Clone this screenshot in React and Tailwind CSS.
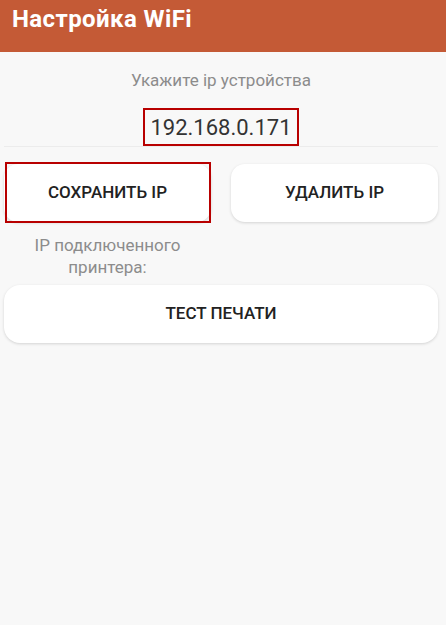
export default function App() {
    return (
        <div className="min-h-[625px] bg-[#f8f8f8] font-['Roboto',sans-serif]">
            <div className="h-[52px] bg-[#c45a36] px-3 pt-[4px]">
                <h1 className="text-[24px] font-bold leading-[30px] tracking-[0.4px] text-white">Настройка WiFi</h1>
            </div>

            <div className="pl-1 pr-2">
                <p className="mt-[18px] text-center text-[17px] leading-[20px] text-[#8c8c8c]">
                    Укажите ip устройства
                </p>

                {/* IP field */}
                <div className="mt-[18px] flex justify-center border-b border-[#ececec]">
                    <div className="flex h-[38px] items-center border-2 border-[#b80000] px-[5px] text-[22px] text-[#333]">
                        192.168.0.171
                    </div>
                </div>

                <div className="mt-[17px] grid grid-cols-2 gap-5">
                    <div>
                        <div className="relative">
                            <button className="flex h-[58px] w-full items-center justify-center rounded-[14px] bg-white text-[17px] font-medium text-[#222] shadow-[0_1px_3px_rgba(0,0,0,0.15)]">
                                СОХРАНИТЬ IP
                            </button>
                            <div className="absolute -top-[2px] -bottom-[1px] left-[1px] right-0 border-2 border-[#b80000]"></div>
                        </div>
                        <p className="mt-[12px] text-center text-[17px] leading-[22px] text-[#8c8c8c]">
                            IP подключенного принтера:
                        </p>
                    </div>
                    <div>
                        <button className="flex h-[58px] w-full items-center justify-center rounded-[14px] bg-white text-[17px] font-medium text-[#222] shadow-[0_1px_3px_rgba(0,0,0,0.15)]">
                            УДАЛИТЬ IP
                        </button>
                    </div>
                </div>

                <button className="mt-[7px] flex h-[58px] w-full items-center justify-center rounded-[16px] bg-white text-[17px] font-medium text-[#222] shadow-[0_1px_3px_rgba(0,0,0,0.15)]">
                    ТЕСТ ПЕЧАТИ
                </button>
            </div>
        </div>
    );
}
